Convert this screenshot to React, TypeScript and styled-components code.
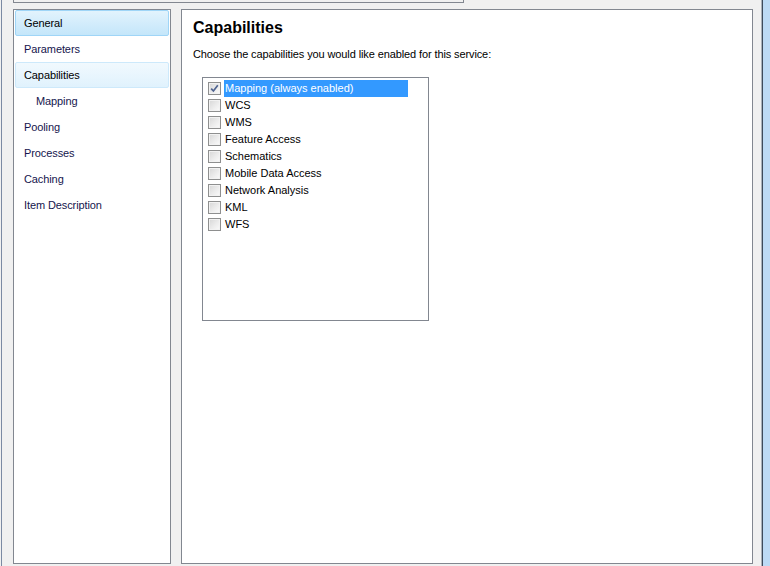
import React from "react";
import styled, { createGlobalStyle } from "styled-components";

const Global = createGlobalStyle`
  html, body { margin: 0; padding: 0; }
  body {
    background: #f0f0f0;
    font-family: "Liberation Sans", Arial, sans-serif;
    font-size: 11px;
    color: #000;
  }
`;

const Window = styled.div`
  width: 770px;
  height: 566px;
  display: flex;
  background: #f0f0f0;
  overflow: hidden;
`;

const LeftEdge = styled.div`
  flex: none;
  width: 1px;
  margin-left: 1px;
  background: #7b8aa3;
`;

const RightEdge = styled.div`
  flex: none;
  width: 9px;
  display: flex;
`;

const EdgeLine = styled.div<{ $w: number; $c: string }>`
  width: ${(p) => p.$w}px;
  background: ${(p) => p.$c};
`;

const Body = styled.div`
  flex: 1;
  min-width: 0;
  display: flex;
  flex-direction: column;
  padding-left: 11px;
`;

const TopField = styled.div`
  flex: none;
  box-sizing: border-box;
  width: 451px;
  height: 3px;
  border: 1px solid #828790;
  border-top: none;
  background: #f0f0f0;
`;

const Panels = styled.div`
  display: flex;
  gap: 10px;
  margin-top: 6px;
  height: 555px;
`;

const NavPanel = styled.div`
  box-sizing: border-box;
  width: 158px;
  height: 100%;
  border: 1px solid #828790;
  background: #fff;
  display: flex;
  flex-direction: column;
`;

const NavItem = styled.div<{ $state?: "selected" | "hover"; $indent?: boolean }>`
  box-sizing: border-box;
  height: 26px;
  margin: 0 1px;
  border: 1px solid transparent;
  border-radius: 2px;
  padding-left: ${(p) => (p.$indent ? 20 : 8)}px;
  display: flex;
  align-items: center;
  font-size: 11px;
  letter-spacing: -0.1px;
  color: #15154d;
  ${(p) =>
    p.$state === "selected" &&
    `
    border-color: #9fd5f7;
    background: linear-gradient(#e2f3fd, #c4e6fa);
    color: #000;
  `}
  ${(p) =>
    p.$state === "hover" &&
    `
    border-color: #cde9fb;
    background: linear-gradient(#f1f9fe, #e0f2fd);
    color: #000;
  `}
`;

const ContentPanel = styled.div`
  box-sizing: border-box;
  width: 572px;
  height: 100%;
  border: 1px solid #828790;
  background: #fff;
  padding: 8px 0 0 11px;
  display: flex;
  flex-direction: column;
`;

const Title = styled.h1`
  margin: 0;
  font-size: 16px;
  line-height: 20px;
  font-weight: bold;
  color: #000;
`;

const Description = styled.p`
  margin: 10px 0 0 0;
  font-size: 11px;
  line-height: 13px;
  letter-spacing: -0.11px;
`;

const ListBox = styled.div`
  box-sizing: border-box;
  margin: 16px 0 0 9px;
  width: 227px;
  height: 244px;
  border: 1px solid #828790;
  background: #fff;
  padding: 2px 0 0 5px;
  display: flex;
  flex-direction: column;
`;

const Row = styled.div`
  height: 17px;
  display: flex;
  align-items: center;
`;

const Check = styled.span`
  box-sizing: border-box;
  flex: none;
  width: 13px;
  height: 13px;
  border: 1px solid #8e8f8f;
  background: linear-gradient(135deg, #d6d6d6 0%, #ececec 55%, #fbfbfb 100%);
  box-shadow: inset 0 0 0 1px #f2f2f2;
  display: flex;
  align-items: center;
  justify-content: center;
`;

const Label = styled.span<{ $selected?: boolean }>`
  box-sizing: border-box;
  width: 184px;
  height: 17px;
  margin-left: 3px;
  padding-left: 1px;
  line-height: 17px;
  font-size: 11px;
  white-space: nowrap;
  background: ${(p) => (p.$selected ? "#3399ff" : "transparent")};
  color: ${(p) => (p.$selected ? "#fff" : "#000")};
`;

const navItems: { label: string; state?: "selected" | "hover"; indent?: boolean }[] = [
  { label: "General", state: "selected" },
  { label: "Parameters" },
  { label: "Capabilities", state: "hover" },
  { label: "Mapping", indent: true },
  { label: "Pooling" },
  { label: "Processes" },
  { label: "Caching" },
  { label: "Item Description" },
];

const capabilities: { label: string; checked?: boolean }[] = [
  { label: "Mapping (always enabled)", checked: true },
  { label: "WCS" },
  { label: "WMS" },
  { label: "Feature Access" },
  { label: "Schematics" },
  { label: "Mobile Data Access" },
  { label: "Network Analysis" },
  { label: "KML" },
  { label: "WFS" },
];

const CheckMark = () => (
  <svg width="9" height="9" viewBox="0 0 9 9">
    <path d="M1.2 4.6 L3.4 7 L7.8 1.2" fill="none" stroke="#4f6390" strokeWidth="1.7" />
  </svg>
);

export default function App() {
  return (
    <>
      <Global />
      <Window>
        <LeftEdge />
        <Body>
          <TopField />
          <Panels>
            <NavPanel>
              {navItems.map((n) => (
                <NavItem key={n.label} $state={n.state} $indent={n.indent}>
                  {n.label}
                </NavItem>
              ))}
            </NavPanel>
            <ContentPanel>
              <Title>Capabilities</Title>
              <Description>Choose the capabilities you would like enabled for this service:</Description>
              <ListBox>
                {capabilities.map((c) => (
                  <Row key={c.label}>
                    <Check>{c.checked && <CheckMark />}</Check>
                    <Label $selected={c.checked}>{c.label}</Label>
                  </Row>
                ))}
              </ListBox>
            </ContentPanel>
          </Panels>
        </Body>
        <RightEdge>
          <EdgeLine $w={1} $c="#a9b1ba" />
          <EdgeLine $w={1} $c="#3d4b5c" />
          <EdgeLine $w={7} $c="#bcdaf5" />
        </RightEdge>
      </Window>
    </>
  );
}
